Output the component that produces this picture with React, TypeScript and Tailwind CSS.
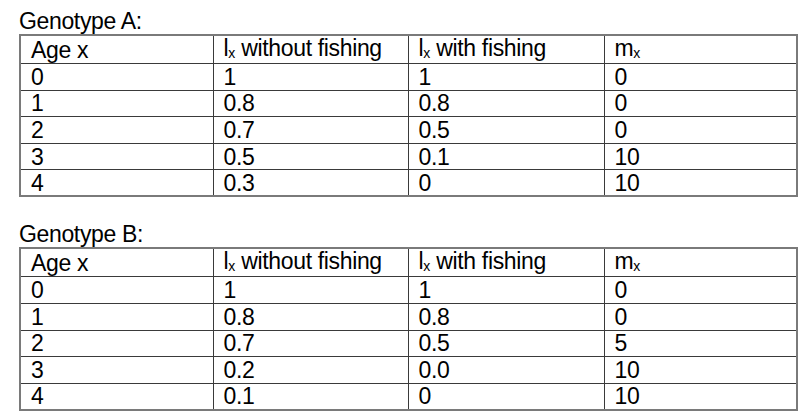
import React from 'react';

type Row = [string, string, string, string];

const tableA: Row[] = [
  ['0', '1', '1', '0'],
  ['1', '0.8', '0.8', '0'],
  ['2', '0.7', '0.5', '0'],
  ['3', '0.5', '0.1', '10'],
  ['4', '0.3', '0', '10'],
];

const tableB: Row[] = [
  ['0', '1', '1', '0'],
  ['1', '0.8', '0.8', '0'],
  ['2', '0.7', '0.5', '5'],
  ['3', '0.2', '0.0', '10'],
  ['4', '0.1', '0', '10'],
];

const Sub = () => <span className="relative top-[2px] text-[14px] tracking-normal">x</span>;

const cell = 'border border-[#3a3a3a] p-0 pl-[10px] text-left font-normal align-middle';

const LifeTable = ({ title, rows, titleGap }: { title: string; rows: Row[]; titleGap: string }) => (
  <div className="flex flex-col">
    <div className={`pl-[19px] text-[23px] leading-[25px] tracking-[-0.35px] ${titleGap}`}>{title}</div>
    <table className="ml-[19px] w-[777px] table-fixed border-collapse border-2 border-[#7a7a7a] text-[23px] leading-[24px] tracking-[-0.35px]">
      <colgroup>
        <col className="w-[193px]" />
        <col className="w-[195px]" />
        <col className="w-[196px]" />
        <col className="w-[193px]" />
      </colgroup>
      <thead>
        <tr className="h-[26.6px]">
          <th className={cell}>Age x</th>
          <th className={cell}>
            l<Sub /> without fishing
          </th>
          <th className={cell}>
            l<Sub /> with fishing
          </th>
          <th className={cell}>
            m<Sub />
          </th>
        </tr>
      </thead>
      <tbody>
        {rows.map((r) => (
          <tr key={r[0]} className="h-[26.6px]">
            {r.map((v, i) => (
              <td key={i} className={cell}>
                {v}
              </td>
            ))}
          </tr>
        ))}
      </tbody>
    </table>
  </div>
);

export default function App() {
  return (
    <div
      className="h-[413px] w-[805px] overflow-hidden bg-white text-black"
      style={{ fontFamily: '"Liberation Sans", Arial, sans-serif' }}
    >
      <LifeTable title="Genotype A:" rows={tableA} titleGap="pt-[9px]" />
      <LifeTable title="Genotype B:" rows={tableB} titleGap="pt-[25px]" />
    </div>
  );
}
